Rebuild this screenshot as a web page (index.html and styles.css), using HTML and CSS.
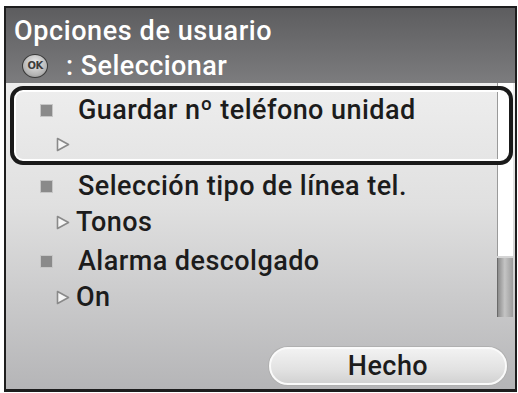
FILE: index.html
```html
<!DOCTYPE html>
<html lang="es">
<head>
<meta charset="utf-8">
<link rel="stylesheet" href="styles.css">
</head>
<body>
<div class="screen">
  <header class="header">
    <div class="title">Opciones de usuario</div>
    <div class="hint"><span class="ok-key">OK</span><span class="hint-text">: Seleccionar</span></div>
  </header>
  <main class="list-area">
    <div class="scrollbar"><div class="track"></div><div class="thumb"></div></div>
    <div class="items">
      <div class="item selected">
        <div class="line"><span class="bullet"></span><span class="label">Guardar nº teléfono unidad</span></div>
        <div class="line sub"><svg class="tri" width="14" height="15" viewBox="0 0 14 15"><polygon points="1.5,1.5 12.5,7.5 1.5,13.5" /></svg><span class="value"></span></div>
      </div>
      <div class="item">
        <div class="line"><span class="bullet"></span><span class="label">Selección tipo de línea tel.</span></div>
        <div class="line sub"><svg class="tri" width="14" height="15" viewBox="0 0 14 15"><polygon points="1.5,1.5 12.5,7.5 1.5,13.5" /></svg><span class="value">Tonos</span></div>
      </div>
      <div class="item">
        <div class="line"><span class="bullet"></span><span class="label">Alarma descolgado</span></div>
        <div class="line sub"><svg class="tri" width="14" height="15" viewBox="0 0 14 15"><polygon points="1.5,1.5 12.5,7.5 1.5,13.5" /></svg><span class="value">On</span></div>
      </div>
    </div>
    <div class="footer"><button class="done">Hecho</button></div>
  </main>
</div>
</body>
</html>
```

FILE: styles.css
```css
html, body { margin: 0; padding: 0; background: #ffffff; }
body { width: 518px; height: 393px; overflow: hidden; }
.screen {
  margin: 6px 1px 2px 4px;
  width: 509px;
  height: 381px;
  border: 2px solid #1e1e1e;
  border-bottom-width: 3px;
  display: flex;
  flex-direction: column;
  font-family: Roboto, "Liberation Sans", sans-serif;
  font-weight: 500;
  letter-spacing: 0.45px;
}
.header {
  height: 75px;
  background: linear-gradient(to bottom, #5d5d5f, #7c7c7e);
  color: #ffffff;
  padding-left: 8px;
  box-sizing: border-box;
}
.title {
  font-size: 27px;
  line-height: 34px;
  padding-top: 6px;
  letter-spacing: 0.6px;
}
.hint {
  display: flex;
  align-items: center;
  height: 35px;
  font-size: 27px;
}
.ok-key {
  width: 24px;
  height: 22px;
  margin-left: 8px;
  border-radius: 50%;
  background: radial-gradient(circle at 50% 35%, #ececec, #b4b4b4 65%, #7e7e7e);
  border: 1px solid #3a3a3a;
  color: #3c3c3c;
  font-family: "DejaVu Sans", sans-serif;
  font-size: 10px;
  font-weight: bold;
  letter-spacing: -0.5px;
  display: flex;
  align-items: center;
  justify-content: center;
  flex: none;
}
.hint-text { margin-left: 18px; }
.list-area {
  flex: 1;
  background: linear-gradient(to bottom, #eeeeee, #e0e0e0 40%, #b5b5b7);
  display: grid;
  grid-template-columns: 4px 1fr 16px 2px;
  grid-template-rows: auto 1fr;
  color: #1c1c1c;
}
.scrollbar {
  grid-column: 3;
  grid-row: 1 / span 2;
  display: flex;
  flex-direction: column;
}
.track {
  height: 173px;
  background: #ffffff;
  border-left: 1px solid #9a9a9a;
}
.thumb {
  margin-top: 2px;
  height: 59px;
  background: linear-gradient(to right, #8c8c8c, #c4c4c4 45%, #9c9c9c);
  border-left: 1px solid #6a6a6a;
}
.items {
  grid-column: 2 / span 2;
  grid-row: 1;
  padding-top: 3px;
  z-index: 1;
}
.item {
  padding-left: 30px;
  padding-top: 3px;
}
.item.selected {
  border: 4px solid #1a1a1a;
  border-radius: 13px;
  box-shadow: inset 0 0 0 2px #ffffff;
  padding-left: 26px;
  padding-top: 3px;
}
.line {
  display: flex;
  align-items: center;
  height: 36px;
  font-size: 27px;
}
.selected .line { height: 34px; }
.bullet {
  width: 11px;
  height: 11px;
  background: #8a8a8a;
  border: 1px solid #c6c6c6;
  margin-right: 25px;
  flex: none;
}
.tri {
  margin-left: 16px;
  margin-right: 6px;
  flex: none;
}
.tri polygon {
  fill: #f6f6f6;
  stroke: #8a8a8a;
  stroke-width: 1.6;
  stroke-linejoin: round;
}
.footer {
  grid-column: 2 / span 2;
  grid-row: 2;
  display: flex;
  justify-content: flex-end;
  align-items: flex-end;
  padding-bottom: 4px;
}
.done {
  width: 238px;
  height: 38px;
  border-radius: 19px;
  border: 2px solid #fafafa;
  box-shadow: 0 0 0 1px #b0b0b0;
  background: linear-gradient(to bottom, #f2f2f2, #e2e2e2 60%, #d2d2d2);
  font-family: inherit;
  font-weight: 500;
  letter-spacing: 0.45px;
  font-size: 27px;
  color: #1c1c1c;
  padding: 0;
  margin-right: 6px;
}
```
